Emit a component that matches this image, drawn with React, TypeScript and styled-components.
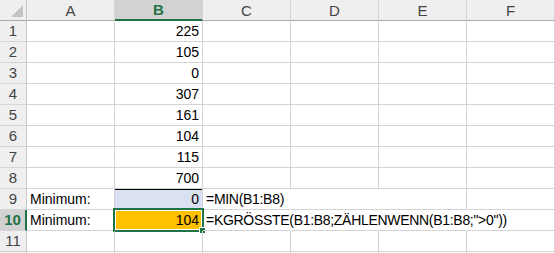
import styled, { createGlobalStyle } from "styled-components";

const GlobalStyle = createGlobalStyle`
	body {
		margin: 0;
		background: #ffffff;
		font-family: "Liberation Sans", Arial, sans-serif;
	}
`;

const COLUMNS = ["A", "B", "C", "D", "E", "F"];

type CellData = {
	a?: string;
	b?: string;
	c?: string;
};

const rows: CellData[] = [
	{ b: "225" },
	{ b: "105" },
	{ b: "0" },
	{ b: "307" },
	{ b: "161" },
	{ b: "104" },
	{ b: "115" },
	{ b: "700" },
	{ a: "Minimum:", b: "0", c: "=MIN(B1:B8)" },
	{ a: "Minimum:", b: "104", c: '=KGRÖSSTE(B1:B8;ZÄHLENWENN(B1:B8;">0"))' },
	{},
	{},
];

// which gridlines get swallowed by overflowing formula text
const hiddenLines: Record<number, string[]> = {
	9: ["C", "D"],
	10: ["C", "D", "E"],
};

type CellProps = {
	$align?: "left" | "right";
	$fill?: string;
	$hideRight?: boolean;
	$topBorder?: boolean;
};

const Sheet = styled.div`
	display: grid;
	grid-template-columns: 27px repeat(6, 88px);
	grid-template-rows: 21px;
	grid-auto-rows: 21px;
	width: 555px;
	height: 253px;
	overflow: hidden;
	font-size: 14px;
	color: #000000;
`;

const Corner = styled.div`
	position: relative;
	background: #efefef;
	border-right: 1px solid #c6c6c6;
	border-bottom: 1px solid #ababab;
	box-sizing: border-box;

	&::after {
		content: "";
		position: absolute;
		right: 3px;
		bottom: 3px;
		border-style: solid;
		border-width: 0 0 12px 12px;
		border-color: transparent transparent #c4c4c4 transparent;
	}
`;

const ColHeader = styled.div<{ $active?: boolean }>`
	display: flex;
	align-items: center;
	justify-content: center;
	box-sizing: border-box;
	padding-top: 1px;
	background: ${(p) => (p.$active ? "#d2d2d2" : "#efefef")};
	border-right: 1px solid #d4d4d4;
	border-bottom: ${(p) => (p.$active ? "2px solid #217346" : "1px solid #ababab")};
	color: ${(p) => (p.$active ? "#217346" : "#444444")};
	font-weight: ${(p) => (p.$active ? 700 : 400)};
	font-size: 15px;
	line-height: 18px;
`;

const RowHeader = styled.div<{ $active?: boolean }>`
	display: flex;
	align-items: center;
	justify-content: center;
	box-sizing: border-box;
	background: ${(p) => (p.$active ? "#d2d2d2" : "#efefef")};
	border-right: ${(p) => (p.$active ? "2px solid #217346" : "1px solid #c6c6c6")};
	border-bottom: 1px solid #d4d4d4;
	color: ${(p) => (p.$active ? "#217346" : "#444444")};
	font-weight: ${(p) => (p.$active ? 700 : 400)};
	font-size: 15px;
	line-height: 20px;
`;

const Cell = styled.div<CellProps>`
	position: relative;
	box-sizing: border-box;
	padding: 0 3px;
	background: ${(p) => p.$fill ?? "transparent"};
	border-right: 1px solid ${(p) => (p.$hideRight ? "transparent" : "#d4d4d4")};
	border-bottom: 1px solid #d4d4d4;
	box-shadow: ${(p) => (p.$topBorder ? "inset 0 1px 0 #000000" : "none")};
	text-align: ${(p) => p.$align ?? "left"};
	line-height: 20px;
	white-space: nowrap;
	overflow: visible;
	z-index: 1;
`;

const Formula = styled.span`
	position: relative;
	z-index: 2;
	letter-spacing: -0.3px;
`;

const Selection = styled.div`
	position: absolute;
	left: -2px;
	top: -2px;
	right: -2px;
	bottom: -2px;
	border: 2px solid #217346;
	box-shadow: inset 0 0 0 1px #ffffff;
	pointer-events: none;
	z-index: 3;

	&::after {
		content: "";
		position: absolute;
		right: -4px;
		bottom: -4px;
		width: 5px;
		height: 5px;
		background: #217346;
		border: 1px solid #ffffff;
	}
`;

const SelectedValue = styled.span`
	position: relative;
	z-index: 4;
`;

export default function App() {
	return (
		<>
			<GlobalStyle />
			<Sheet>
				<Corner />
				{COLUMNS.map((col) => (
					<ColHeader key={col} $active={col === "B"}>
						{col}
					</ColHeader>
				))}
				{rows.map((row, i) => {
					const n = i + 1;
					const hidden = hiddenLines[n] ?? [];
					const selected = n === 10;
					// row 12 only peeks in at the bottom edge, its number is not visible
					const label = n <= 11 ? n : "";
					return [
						<RowHeader key={`h${n}`} $active={selected}>
							{label}
						</RowHeader>,
						<Cell key={`a${n}`}>{row.a}</Cell>,
						<Cell
							key={`b${n}`}
							$align="right"
							$fill={n === 9 ? "#d9e1f2" : selected ? "#ffc000" : undefined}
							$topBorder={n === 9}
						>
							{selected && <Selection />}
							{selected ? <SelectedValue>{row.b}</SelectedValue> : row.b}
						</Cell>,
						<Cell key={`c${n}`} $hideRight={hidden.includes("C")}>
							{row.c && <Formula>{row.c}</Formula>}
						</Cell>,
						<Cell key={`d${n}`} $hideRight={hidden.includes("D")} />,
						<Cell key={`e${n}`} $hideRight={hidden.includes("E")} />,
						<Cell key={`f${n}`} />,
					];
				})}
			</Sheet>
		</>
	);
}
